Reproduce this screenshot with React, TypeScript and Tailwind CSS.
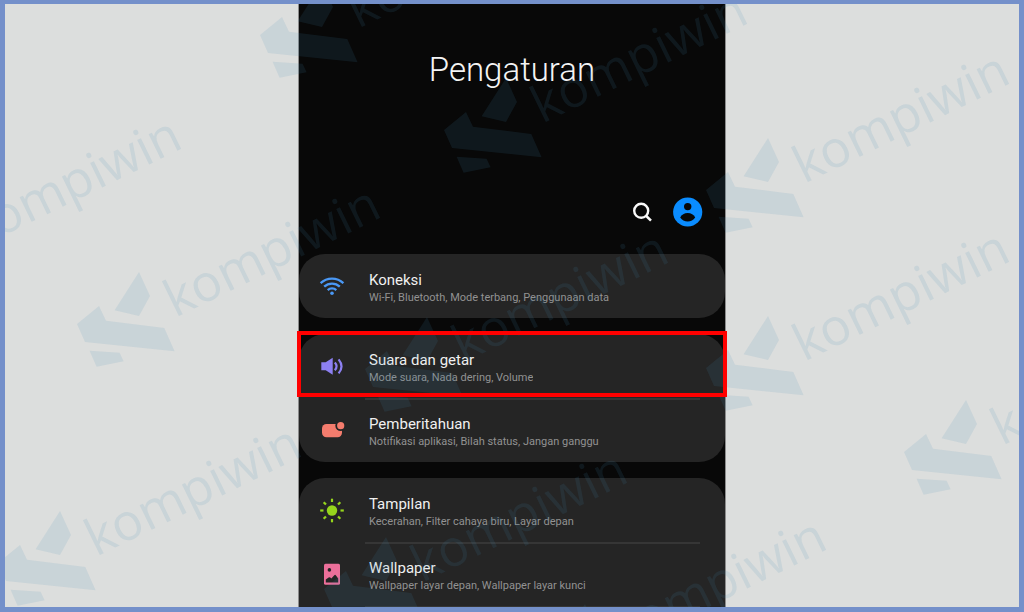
import type { ReactNode } from "react";

type Item = {
  title: string;
  detail: string;
  icon: ReactNode;
  highlighted?: boolean;
};

function WifiIcon() {
  return (
    <svg viewBox="0 0 26 26" className="size-[26px] shrink-0" fill="none" stroke="#4a98f5" strokeWidth="2.3" aria-hidden="true">
      <path d="M1.6 10.2A16.5 16.5 0 0 1 24.4 10.2" />
      <path d="M5.2 13.7A11.3 11.3 0 0 1 20.8 13.7" />
      <path d="M8.7 17.2A6.2 6.2 0 0 1 17.3 17.2" />
      <circle cx="13" cy="20.3" r="1.8" fill="#4a98f5" stroke="none" />
    </svg>
  );
}

function VolumeIcon() {
  return (
    <svg viewBox="0 0 26 26" className="size-[26px] shrink-0" fill="none" stroke="#8d80f2" strokeWidth="2.2" aria-hidden="true">
      <path d="M2.3 9.3H6.7L13.7 4.7V21.7L6.7 17.3H2.3Z" fill="#8d80f2" stroke="none" />
      <path d="M15.8 9.6Q19.4 13.4 15.8 17.2" />
      <path d="M19.6 6.4Q25.4 13.4 19.6 20.4" />
    </svg>
  );
}

function NotificationIcon() {
  return (
    <svg viewBox="0 0 26 26" className="size-[26px] shrink-0" aria-hidden="true">
      <rect x="3" y="7" width="20" height="13.2" rx="4.5" fill="#f47c6d" />
      <circle cx="21.7" cy="8.7" r="5.4" fill="#252525" />
      <circle cx="21.7" cy="8.7" r="3.6" fill="#f47c6d" />
    </svg>
  );
}

function SunIcon() {
  return (
    <svg viewBox="0 0 26 26" className="size-[26px] shrink-0" aria-hidden="true">
      <circle cx="13" cy="13.5" r="5.2" fill="#96d51c" />
      {[0, 45, 90, 135, 180, 225, 270, 315].map((angle) => (
        <path key={angle} d="M13 1.7V5" stroke="#96d51c" strokeWidth="2.2" transform={`rotate(${angle} 13 13.5)`} />
      ))}
    </svg>
  );
}

function WallpaperIcon() {
  return (
    <svg viewBox="0 0 26 26" className="size-[26px] shrink-0" aria-hidden="true">
      <rect x="5" y="2.8" width="16" height="21" rx="1.5" fill="#ec6f9a" />
      <circle cx="10.4" cy="8.9" r="1.8" fill="#252525" />
      <path d="M6.8 21.6V18.6L9.6 16.4Q10.5 15.8 11.3 16.6L12.3 17.5L15.3 14.2Q16.2 13.4 17 14.4L19.2 17.4V21.6Z" fill="#252525" />
    </svg>
  );
}

const GROUPS: Item[][] = [
  [{ title: "Koneksi", detail: "Wi-Fi, Bluetooth, Mode terbang, Penggunaan data", icon: <WifiIcon /> }],
  [
    { title: "Suara dan getar", detail: "Mode suara, Nada dering, Volume", icon: <VolumeIcon />, highlighted: true },
    { title: "Pemberitahuan", detail: "Notifikasi aplikasi, Bilah status, Jangan ganggu", icon: <NotificationIcon /> },
  ],
  [
    { title: "Tampilan", detail: "Kecerahan, Filter cahaya biru, Layar depan", icon: <SunIcon /> },
    { title: "Wallpaper", detail: "Wallpaper layar depan, Wallpaper layar kunci", icon: <WallpaperIcon /> },
  ],
];

// Top tip of each logo mark
const MARKS = [
  [322, -17],
  [506, 78],
  [-60, 203],
  [139, 272],
  [768, 138],
  [768, 316],
  [427, 317],
  [966, 400],
  [60, 511],
  [386, 537],
  [585, 604],
];

function Watermark() {
  return (
    <svg
      className="pointer-events-none absolute inset-0 h-full w-full font-['Open_Sans',sans-serif] text-[51px] font-normal"
      fill="#3e8db2"
      fillOpacity="0.12"
      aria-hidden="true"
    >
      {MARKS.map(([x, y]) => (
        <g key={`${x},${y}`} transform={`translate(${x} ${y})`}>
          <path d="M0 0L11 24L0 44L-24.4 38.3Z" />
          <path d="M-62 52L-40 34L-33 48.7L25.3 56L35.6 79.3L-54 70Z" />
          <path d="M-49.4 78.7L-19.4 80.7L-15.4 89.3L-42.4 94.7Z" />
          <text transform="translate(36 46) rotate(-26)">kompiwin</text>
        </g>
      ))}
    </svg>
  );
}

function SettingRow({ item, divided }: { item: Item; divided: boolean }) {
  return (
    <li className="relative">
      <a href="#" className="flex h-16 items-center gap-6 pl-5 pr-6">
        {item.icon}
        <span className="flex min-w-0 flex-col pt-1">
          <span className="text-[15px] leading-5 text-[#f0f0f0]">{item.title}</span>
          <span className="truncate text-[11px] leading-4 text-[#929292]">{item.detail}</span>
        </span>
      </a>
      {divided && <div className="absolute bottom-[-2px] left-[66px] right-[25px] h-0.5 bg-[#363636]" />}
      {item.highlighted && (
        <div className="pointer-events-none absolute -inset-x-0.5 -top-[3px] bottom-px z-20 border-4 border-[#ff0000]" />
      )}
    </li>
  );
}

export default function App() {
  return (
    <div className="relative h-screen overflow-hidden border-[5px] border-t-4 border-[#7490ca] bg-[#dcdedd] font-[Roboto,sans-serif]">
      <main className="mx-auto flex min-h-full max-w-[428px] flex-col border-x border-[#8c8c8c] bg-[#080808]">
        <header className="pt-[46px] pb-[27px]">
          <h1 className="text-center text-[33px] font-light leading-10 text-[#f4f4f4]">Pengaturan</h1>
          <div className="mt-[107px] flex items-center justify-end gap-4 pr-[22px]">
            <button type="button" aria-label="Cari" className="flex size-[30px] items-center justify-center">
              <svg viewBox="0 0 20 20" className="size-5" fill="none" stroke="#fafafa" strokeWidth="2.4" aria-hidden="true">
                <circle cx="9.2" cy="8.8" r="7" />
                <path d="M14 13.8L19 18.6" strokeWidth="2.6" />
              </svg>
            </button>
            <button type="button" aria-label="Akun" className="size-[30px]">
              <svg viewBox="0 0 30 30" className="size-full" aria-hidden="true">
                <circle cx="14.7" cy="15" r="14.6" fill="#0a8cff" />
                <circle cx="14.7" cy="9.6" r="3.7" fill="#080808" />
                <path d="M7.2 20.6C8.6 17.4 11.4 15.9 14.7 15.9S20.8 17.4 22.2 20.6C20.4 23.2 17.8 24.6 14.7 24.6S9 23.2 7.2 20.6Z" fill="#080808" />
              </svg>
            </button>
          </div>
        </header>

        <div className="flex grow flex-col gap-4">
          {GROUPS.map((group, g) => {
            // the last card runs on past the bottom of the screen
            const open = g === GROUPS.length - 1;
            return (
              <ul key={group[0].title} className={open ? "grow rounded-t-[26px] bg-[#252525]" : "rounded-[26px] bg-[#252525]"}>
                {group.map((item, i) => (
                  <SettingRow key={item.title} item={item} divided={open || i < group.length - 1} />
                ))}
              </ul>
            );
          })}
        </div>
      </main>
      <div className="pointer-events-none absolute -top-1 -right-[5px] -bottom-[5px] -left-[5px] z-10">
        <Watermark />
      </div>
    </div>
  );
}
